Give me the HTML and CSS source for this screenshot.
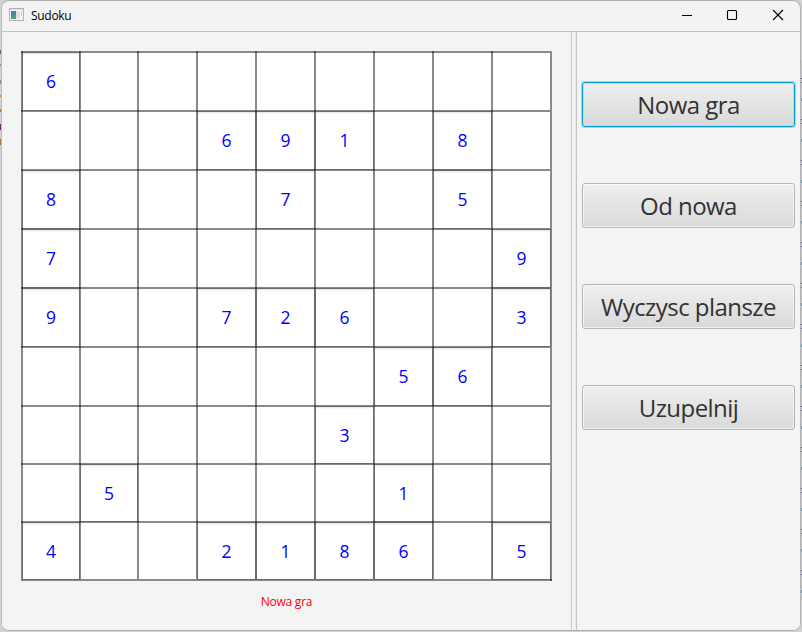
FILE: index.html
```
<!DOCTYPE html>
<html lang="pl">
<head>
<meta charset="utf-8">
<title>Sudoku</title>
<link rel="stylesheet" href="styles.css">
</head>
<body>
<div class="window">
  <header class="titlebar">
    <svg class="app-icon" width="16" height="14" viewBox="0 0 16 14">
      <defs><linearGradient id="pane" x2="0" y2="1"><stop stop-color="#4676ad"/><stop offset="1" stop-color="#4cab73"/></linearGradient></defs>
      <rect x=".5" y=".5" width="14" height="12" fill="#f4f5f7" stroke="#adb2b7"/>
      <path d="M1 1.5h13" stroke="#dce1e6"/>
      <rect x="2" y="3" width="5" height="8" fill="url(#pane)"/>
      <rect x="7" y="3" width="4" height="8" fill="#d9e3e8"/>
      <path d="M12.5 3v5" stroke="#b7d4c8"/>
    </svg>
    <span class="title">Sudoku</span>
    <svg class="controls" width="104" height="12" viewBox="0 0 104 12">
      <path d="M0 6.5h10" stroke="#000"/>
      <rect x="45.5" y="1.5" width="9" height="9" rx="1" fill="none" stroke="#000" stroke-width="1.1"/>
      <path d="M91 1l10 10M101 1L91 11" stroke="#000" stroke-width="1.1"/>
    </svg>
  </header>
  <main class="split">
    <section class="game">
      <div class="board" id="board"></div>
      <p class="status">Nowa gra</p>
    </section>
    <div class="divider"></div>
    <aside class="actions">
      <button class="action focused">Nowa gra</button>
      <button class="action">Od nowa</button>
      <button class="action">Wyczysc plansze</button>
      <button class="action">Uzupelnij</button>
    </aside>
  </main>
</div>
<script src="board.js"></script>
</body>
</html>
```
FILE: styles.css
```
* { box-sizing: border-box; }
body {
  margin: 0;
  height: 632px;
  overflow: hidden;
  /* Slivers of the desktop behind the window's left and right edges */
  background:
    linear-gradient(#8b5a6a, #3f6c8e) 0 50px / 1px 4px no-repeat,
    linear-gradient(#b98a4a, #b98a4a) 0 64px / 1px 2px no-repeat,
    linear-gradient(#6f9aa3, #6f9aa3) 0 80px / 1px 4px no-repeat,
    linear-gradient(#b98a4a, #b98a4a) 0 95px / 1px 2px no-repeat,
    linear-gradient(#a8743a, #a8743a) 0 109px / 1px 3px no-repeat,
    linear-gradient(#6f2c74, #6f2c74) 0 124px / 1px 6px no-repeat,
    linear-gradient(#ab7229, #ab7229) 0 139px / 1px 6px no-repeat,
    repeating-linear-gradient(#c9c9cc 0 18px, #55556a 18px 19px, #c9c9cc 19px 22px, #6c6288 22px 23px, #c9c9cc 23px 38px, #8099aa 38px 41px) 801px 60px / 1px 540px no-repeat,
    #d2d2d4;
  font-family: "Open Sans", "Noto Sans", sans-serif;
}
.window {
  display: flex;
  flex-direction: column;
  width: 800px;
  height: 631px;
  margin-left: 1px;
  border: 1px solid #b0b0b0;
  border-left-color: #bdbdbd;
  border-radius: 8px;
  background: #f3f3f3;
  overflow: hidden;
}
.titlebar {
  display: flex;
  align-items: center;
  flex: none;
  height: 31px;
  padding: 0 14px 2px 7px;
  border-bottom: 1px solid #c3c3c3;
}
.title {
  margin: 2px 0 0 6px;
  font: 12px/16px "Open Sans", sans-serif;
  letter-spacing: -.3px;
  color: #000;
}
.controls { margin-left: auto; }
.split { display: flex; flex: 1; background: #f4f4f4; }
.game { flex: none; width: 569px; padding: 19px 0 0 19px; }
.board {
  display: grid;
  grid-template-columns: 58px 58px repeat(7, 59px);
  grid-template-rows: 59px 59px 59px 59px 59px 59px 58px 58px 58px;
  width: 531px;
  height: 530px;
  padding: 0 2px 2px 0;
  background:
    linear-gradient(rgba(0,0,0,.46), rgba(0,0,0,.46)) right / 2px 100% no-repeat,
    linear-gradient(rgba(0,0,0,.46), rgba(0,0,0,.46)) bottom / 100% 2px no-repeat,
    #fff;
}
.cell {
  position: relative;
  display: flex;
  align-items: center;
  justify-content: center;
  padding: 1px 0 0 2px;
  background:
    linear-gradient(rgba(0,0,0,.46), rgba(0,0,0,.46)) left / 2px 100% no-repeat,
    linear-gradient(rgba(0,0,0,.46), rgba(0,0,0,.46)) top / 100% 2px no-repeat;
  font-size: 17.5px;
  line-height: 24px;
  color: #0000ff;
}
.clue::after {
  content: "";
  position: absolute;
  inset: 1px -1px -1px 1px;
  border: 1px solid rgba(0,0,0,.22);
  box-shadow: inset 0 2px 2px -1px rgba(0,0,0,.12);
}
.status {
  margin: 12px 0 0;
  width: 531px;
  font-size: 12px;
  line-height: 17px;
  letter-spacing: -.25px;
  text-align: center;
  color: #ff0000;
}
.divider {
  flex: none;
  width: 6px;
  border: solid #c4c4c4;
  border-width: 0 1px;
  background: linear-gradient(90deg, #fafafa, #e9e9e9);
}
.actions {
  display: flex;
  flex-direction: column;
  gap: 56px;
  flex: none;
  width: 223px;
  padding: 50px 5px 0 5px;
}
.action {
  width: 213px;
  height: 45px;
  padding: 0;
  border: 1px solid #b5b5b5;
  border-radius: 3px;
  background: linear-gradient(#efefef, #d9d9d9);
  box-shadow: inset 0 0 0 1px rgba(255,255,255,.6);
  font-family: inherit;
  font-size: 24px;
  line-height: 32px;
  letter-spacing: -.55px;
  color: #323232;
}
.focused {
  border-color: #039ed3;
  box-shadow: 0 0 0 1px #9bd8ec, inset 0 0 0 1px #b9dfea;
}
```
FILE: board.js
```
const rows = [
  "6........",
  "...691.8.",
  "8...7..5.",
  "7.......9",
  "9..726..3",
  "......56.",
  ".....3...",
  ".5....1..",
  "4..2186.5"
];
const board = document.getElementById("board");
for (const value of rows.join("")) {
  const cell = document.createElement("div");
  cell.className = value === "." ? "cell" : "cell clue";
  cell.textContent = value === "." ? "" : value;
  board.append(cell);
}
```
